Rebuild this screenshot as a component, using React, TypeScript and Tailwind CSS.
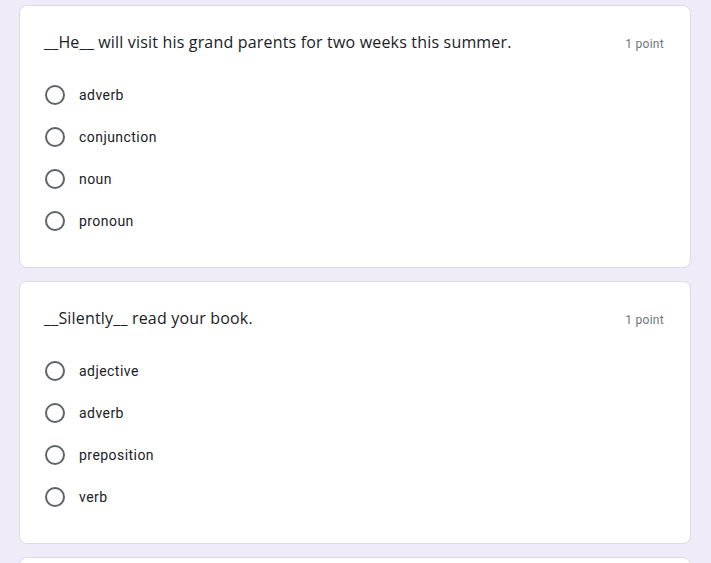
import React from "react";

type Q = { title: string; options: string[] };

const questions: Q[] = [
  {
    title: "__He__ will visit his grand parents for two weeks this summer.",
    options: ["adverb", "conjunction", "noun", "pronoun"],
  },
  {
    title: "__Silently__ read your book.",
    options: ["adjective", "adverb", "preposition", "verb"],
  },
];

function Card({ q }: { q: Q }) {
  return (
    <div className="bg-white border border-[#dadce0] rounded-[8px] px-6 pt-6 pb-[25px]">
      <div className="flex items-baseline justify-between h-6">
        <div
          className="text-[16px] leading-6 text-[#202124] tracking-[0.18px]"
          style={{ fontFamily: '"Open Sans", Roboto, sans-serif' }}
        >
          {q.title}
        </div>
        <div
          className="text-[12px] text-[#70757a] pr-[2px] tracking-[0.3px]"
          style={{ fontFamily: 'Roboto, "Liberation Sans", sans-serif' }}
        >
          1 point
        </div>
      </div>
      <div className="mt-5 flex flex-col">
        {q.options.map((o) => (
          <div key={o} className="h-[42px] flex items-center">
            <div className="ml-[1px] w-[20px] h-[20px] rounded-full border-2 border-[#5f6368] box-border" />
            <div
              className="ml-[14px] text-[14px] text-[#202124] tracking-[0.45px]"
              style={{ fontFamily: 'Roboto, "Liberation Sans", sans-serif' }}
            >
              {o}
            </div>
          </div>
        ))}
      </div>
    </div>
  );
}

export default function App() {
  return (
    <div className="w-[711px] h-[563px] overflow-hidden bg-[#f0ebf8]">
      <div className="pt-[5px] pl-[19px] pr-[20px] flex flex-col gap-[13px]">
        {questions.map((q, i) => (
          <Card key={i} q={q} />
        ))}
        <div className="bg-white border border-[#dadce0] rounded-[8px] h-[200px]" />
      </div>
    </div>
  );
}
